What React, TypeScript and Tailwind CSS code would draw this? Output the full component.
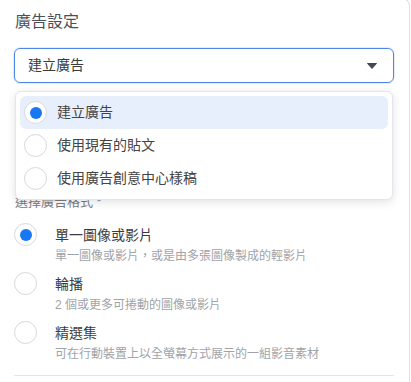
const menuItems = ['建立廣告', '使用現有的貼文', '使用廣告創意中心樣稿']

const formats = [
  { title: '單一圖像或影片', desc: '單一圖像或影片，或是由多張圖像製成的輕影片', checked: true },
  { title: '輪播', desc: '2 個或更多可捲動的圖像或影片', checked: false },
  { title: '精選集', desc: '可在行動裝置上以全螢幕方式展示的一組影音素材', checked: false },
]

function Radio({ checked }: { checked: boolean }) {
  return (
    <div className="w-[23px] h-[23px] shrink-0 rounded-full border border-[#d6d9dd] bg-white flex items-center justify-center">
      {checked && <div className="w-[12px] h-[12px] rounded-full bg-[#1877f2]" />}
    </div>
  )
}

export default function App() {
  return (
    <div className="w-[411px] h-[382px] overflow-hidden bg-white font-['Liberation_Sans','Noto_Sans_CJK_TC',sans-serif] text-[#444]">
      <div className="w-[410px] h-[400px] -mt-[2px] border-r border-t border-[#dddfe2] rounded-tr-lg pl-[14px] pr-[15px] pt-[11px]">
        <h2 className="text-[16px] leading-[24px] pl-[1px] text-[#4b4f56]">廣告設定</h2>

        <div className="relative mt-[14px]">
          <div className="h-[35px] rounded-md border border-[#4f86ec] shadow-[0_0_0_1px_rgba(79,134,236,0.15)] flex items-center justify-between pl-[13px] pr-[16px]">
            <span className="text-[14px] text-[#3a3b3c]">建立廣告</span>
            <svg width="10" height="6" viewBox="0 0 10 6">
              <path d="M0.5 0.5 H9.5 L5 5.5 Z" fill="#444950" stroke="#444950" strokeLinejoin="round" />
            </svg>
          </div>

          <div className="absolute top-[43px] left-[1px] right-[1px] z-10 bg-white rounded-md border border-[#e4e6eb] shadow-[0_2px_10px_rgba(0,0,0,0.12)] p-[4px]">
            {menuItems.map((item, i) => (
              <div
                key={item}
                className={`h-[33px] rounded-md flex items-center gap-[10px] pl-[4px] ${i === 0 ? 'bg-[#e8effc]' : ''}`}
              >
                <Radio checked={i === 0} />
                <span className="text-[14px] text-[#444]">{item}</span>
              </div>
            ))}
          </div>
        </div>

        <div className="mt-[110px] pl-[1px] text-[13px] leading-[18px] text-[#7a7d82]">選擇廣告格式 *</div>

        <div className="mt-[12px] flex flex-col gap-[7px]">
          {formats.map((f) => (
            <div key={f.title} className="flex gap-[18px]">
              <Radio checked={f.checked} />
              <div className="flex flex-col">
                <span className="text-[14px] leading-[24px] text-[#3a3b3c]">{f.title}</span>
                <span className="text-[12px] leading-[18px] text-[#a0a3a8]">{f.desc}</span>
              </div>
            </div>
          ))}
        </div>

        <div className="mt-[12px] border-t border-[#e4e6eb]" />
      </div>
    </div>
  )
}
